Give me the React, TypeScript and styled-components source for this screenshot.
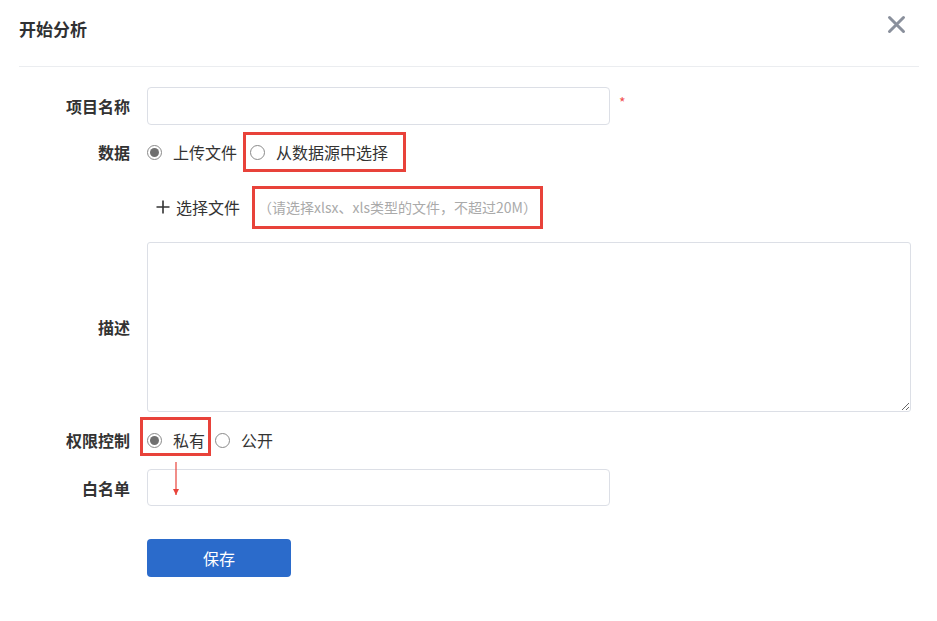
import React from "react";
import styled, { createGlobalStyle } from "styled-components";

const Global = createGlobalStyle`
  html, body { margin: 0; padding: 0; background: #fff; }
  body { font-family: "Noto Sans CJK SC", "Noto Sans", sans-serif; color: #333; }
  * { box-sizing: border-box; }
`;

const Dialog = styled.div`
  width: 937px;
  height: 621px;
  padding: 0 18px 0 19px;
  background: #fff;
`;

const Header = styled.div`
  height: 67px;
  border-bottom: 1px solid #ebedf0;
  display: flex;
  justify-content: space-between;
  align-items: flex-start;
`;

const Title = styled.h2`
  margin: 17px 0 0;
  font-size: 17px;
  line-height: 24px;
  font-weight: 700;
  color: #303133;
`;

const CloseBtn = styled.button`
  margin: 15px 13px 0 0;
  padding: 0;
  border: 0;
  background: none;
  width: 19px;
  height: 19px;
  cursor: pointer;
  display: flex;
`;

const Form = styled.div`
  display: flex;
  flex-direction: column;
`;

const Row = styled.div<{ $top: number; $h?: number }>`
  display: grid;
  grid-template-columns: 111px 1fr;
  column-gap: 17px;
  align-items: center;
  margin-top: ${(p) => p.$top}px;
  min-height: ${(p) => p.$h ?? 40}px;
`;

const Label = styled.label`
  text-align: right;
  font-size: 16px;
  font-weight: 700;
  color: #333;
  line-height: 20px;
`;

const Field = styled.div`
  display: flex;
  align-items: center;
  height: 100%;
`;

const TextInput = styled.input<{ $h?: number }>`
  width: 463px;
  height: ${(p) => p.$h ?? 38}px;
  border: 1px solid #dcdfe6;
  border-radius: 4px;
  outline: none;
  padding: 0 12px;
  font-size: 15px;
  font-family: inherit;
`;

const Required = styled.span`
  color: #f05050;
  font-size: 14px;
  margin-left: 9px;
  margin-top: -8px;
`;

const RadioGroup = styled.div`
  display: flex;
  align-items: stretch;
  height: 40px;
`;

const RadioOption = styled.label<{ $gap?: number }>`
  position: relative;
  display: flex;
  align-items: center;
  gap: 11px;
  margin-right: ${(p) => p.$gap ?? 0}px;
  font-size: 16px;
  color: #333;
  cursor: pointer;
`;

const Circle = styled.span<{ $checked?: boolean }>`
  width: 15px;
  height: 15px;
  border-radius: 50%;
  border: 1px solid #8a8a8a;
  display: flex;
  align-items: center;
  justify-content: center;
  &::after {
    content: "";
    width: 9px;
    height: 9px;
    border-radius: 50%;
    background: ${(p) => (p.$checked ? "#707070" : "transparent")};
  }
`;

const Mark = styled.span<{ $t: number; $r: number; $b: number; $l: number }>`
  position: absolute;
  top: ${(p) => p.$t}px;
  right: ${(p) => p.$r}px;
  bottom: ${(p) => p.$b}px;
  left: ${(p) => p.$l}px;
  border: 3px solid #e8423a;
  pointer-events: none;
`;

const Arrow = styled.svg`
  position: absolute;
  left: 25px;
  top: 42px;
`;

const UploadRow = styled.div`
  display: flex;
  align-items: center;
  height: 40px;
`;

const UploadBtn = styled.button`
  display: flex;
  align-items: center;
  gap: 6px;
  margin-left: 9px;
  padding: 0;
  border: 0;
  background: none;
  font-family: inherit;
  font-size: 16px;
  color: #333;
  cursor: pointer;
`;

const Hint = styled.span`
  position: relative;
  display: flex;
  align-items: center;
  height: 40px;
  margin-left: 18px;
  font-size: 14px;
  color: #aaa;
`;

const TextArea = styled.textarea`
  width: 764px;
  height: 170px;
  border: 1px solid #dcdfe6;
  border-radius: 3px;
  outline: none;
  padding: 8px 12px;
  font-family: inherit;
  font-size: 15px;
  resize: both;
  display: block;
`;

const ButtonWrap = styled.div`
  display: flex;
`;

const SaveButton = styled.button`
  width: 144px;
  height: 38px;
  border: 0;
  border-radius: 4px;
  background: #2b6bcb;
  color: #fff;
  font-family: inherit;
  font-size: 16px;
  cursor: pointer;
`;

export default function App() {
  return (
    <>
      <Global />
      <Dialog>
        <Header>
          <Title>开始分析</Title>
          <CloseBtn aria-label="close">
            <svg width="19" height="19" viewBox="0 0 19 19">
              <path d="M2.5 2.5 L16.5 16.5 M16.5 2.5 L2.5 16.5" stroke="#8a909c" strokeWidth="3" strokeLinecap="round" />
            </svg>
          </CloseBtn>
        </Header>
        <Form>
          <Row $top={20} $h={38}>
            <Label>项目名称</Label>
            <Field>
              <TextInput />
              <Required>*</Required>
            </Field>
          </Row>
          <Row $top={7}>
            <Label>数据</Label>
            <RadioGroup>
              <RadioOption $gap={13}>
                <Circle $checked />
                上传文件
              </RadioOption>
              <RadioOption>
                <Circle />
                从数据源中选择
                <Mark $t={0} $r={-18} $b={0} $l={-7} />
              </RadioOption>
            </RadioGroup>
          </Row>
          <Row $top={15}>
            <span />
            <UploadRow>
              <UploadBtn>
                <svg width="14" height="14" viewBox="0 0 14 14">
                  <path d="M7 0.5 V13.5 M0.5 7 H13.5" stroke="#333" strokeWidth="1.6" />
                </svg>
                选择文件
              </UploadBtn>
              <Hint>
                （请选择xlsx、xls类型的文件，不超过20M）
                <Mark $t={-1} $r={-6} $b={-2} $l={-6} />
              </Hint>
            </UploadRow>
          </Row>
          <Row $top={15} $h={170}>
            <Label>描述</Label>
            <Field>
              <TextArea />
            </Field>
          </Row>
          <Row $top={8}>
            <Label>权限控制</Label>
            <RadioGroup>
              <RadioOption $gap={10}>
                <Circle $checked />
                私有
                <Mark $t={-3} $r={-6} $b={4} $l={-7} />
                <Arrow width="8" height="34" viewBox="0 0 8 34">
                  <path d="M4 0 V33" stroke="#e8423a" strokeWidth="1.2" />
                  <path d="M1 27 L4 33 L7 27 Z" fill="#e8423a" />
                </Arrow>
              </RadioOption>
              <RadioOption>
                <Circle />
                公开
              </RadioOption>
            </RadioGroup>
          </Row>
          <Row $top={9} $h={37}>
            <Label>白名单</Label>
            <Field>
              <TextInput $h={37} />
            </Field>
          </Row>
          <Row $top={33} $h={38}>
            <span />
            <ButtonWrap>
              <SaveButton>保存</SaveButton>
            </ButtonWrap>
          </Row>
        </Form>
      </Dialog>
    </>
  );
}
